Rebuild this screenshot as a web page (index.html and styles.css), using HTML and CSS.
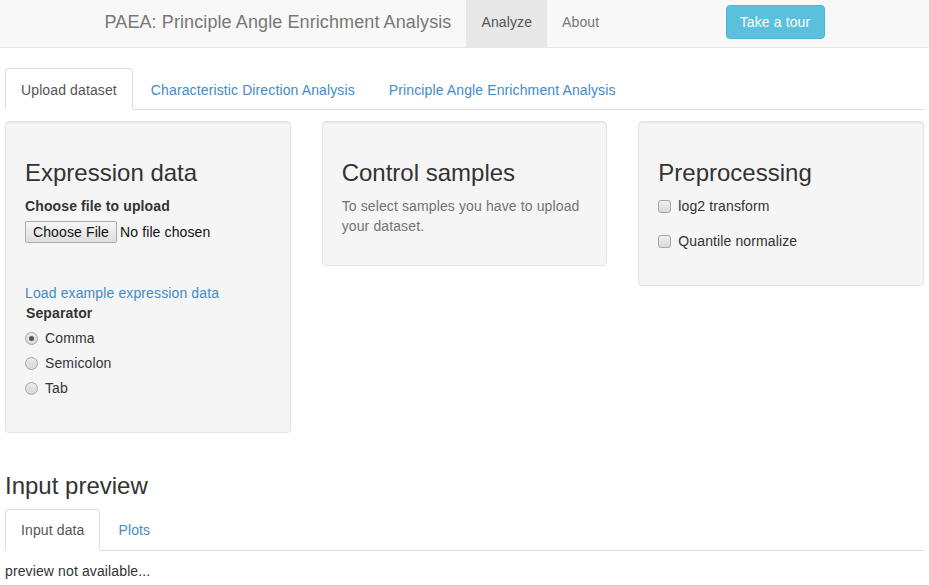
FILE: index.html
```html
<!DOCTYPE html>
<html>
<head>
<meta charset="utf-8">
<title>PAEA</title>
<link rel="stylesheet" href="styles.css">
</head>
<body>
<nav class="navbar">
  <div class="navbar-inner">
    <span class="brand">PAEA: Principle Angle Enrichment Analysis</span>
    <ul class="nav-main">
      <li class="active"><a>Analyze</a></li>
      <li><a>About</a></li>
    </ul>
    <button class="btn-tour">Take a tour</button>
  </div>
</nav>

<main class="page">
  <ul class="tabs tabs-top">
    <li class="active"><a>Upload dataset</a></li>
    <li><a>Characteristic Direction Analysis</a></li>
    <li><a>Principle Angle Enrichment Analysis</a></li>
  </ul>

  <div class="wells">
    <section class="well">
      <h3>Expression data</h3>
      <label class="field-label file-label">Choose file to upload</label>
      <div class="file-input">
        <span class="file-btn">Choose File</span>
        <span class="file-name">No file chosen</span>
      </div>
      <a class="link example-link">Load example expression data</a>
      <label class="field-label sep-label">Separator</label>
      <div class="radio-group">
        <div class="option"><span class="radio checked"></span><span>Comma</span></div>
        <div class="option"><span class="radio"></span><span>Semicolon</span></div>
        <div class="option"><span class="radio"></span><span>Tab</span></div>
      </div>
    </section>

    <section class="well">
      <h3>Control samples</h3>
      <p class="help">To select samples you have to upload your dataset.</p>
    </section>

    <section class="well">
      <h3>Preprocessing</h3>
      <div class="check-group">
        <div class="option"><span class="checkbox"></span><span>log2 transform</span></div>
        <div class="option"><span class="checkbox"></span><span>Quantile normalize</span></div>
      </div>
    </section>
  </div>

  <h3 class="section-title">Input preview</h3>
  <ul class="tabs tabs-bottom">
    <li class="active"><a>Input data</a></li>
    <li><a>Plots</a></li>
  </ul>
  <p class="preview">preview not available...</p>
</main>
</body>
</html>
```

FILE: styles.css
```css
* { box-sizing: border-box; }

html, body {
  margin: 0;
  padding: 0;
}

body {
  font-family: "Liberation Sans", Arial, sans-serif;
  font-size: 14px;
  line-height: 20px;
  letter-spacing: 0.12px;
  color: #333;
  background: #fff;
}

/* Navbar */
.navbar {
  height: 48px;
  background: #f8f8f8;
  border-bottom: 1px solid #e7e7e7;
}

.navbar-inner {
  width: 750px;
  margin: 0 auto;
  padding: 0 15px;
  height: 47px;
  display: flex;
  align-items: center;
}

.brand {
  font-size: 18px;
  color: #777;
  padding-right: 15px;
  line-height: 20px;
  margin-top: -4px;
  letter-spacing: 0.1px;
}

.nav-main {
  list-style: none;
  margin: 0;
  padding: 0;
  display: flex;
  height: 47px;
}

.nav-main li a {
  display: block;
  padding: 0 15px;
  height: 47px;
  line-height: 44px;
  color: #777;
}

.nav-main li.active a {
  background: #e7e7e7;
  color: #555;
}

.btn-tour {
  margin-left: auto;
  font-family: inherit;
  font-size: 14px;
  line-height: 20px;
  letter-spacing: 0.12px;
  color: #fff;
  background: #5bc0de;
  border: 1px solid #46b8da;
  border-radius: 4px;
  padding: 6px 12px;
  width: 99px;
  height: 34px;
  margin-top: -4px;
}

/* Page */
.page {
  padding: 0 5px;
}

.tabs {
  list-style: none;
  margin: 0;
  padding: 0;
  display: flex;
  border-bottom: 1px solid #ddd;
}

.tabs li {
  margin-right: 2px;
  margin-bottom: -1px;
}

.tabs li a {
  display: block;
  padding: 10px 15px;
  line-height: 20px;
  border: 1px solid transparent;
  border-radius: 4px 4px 0 0;
  color: #428bca;
}

.tabs li.active a {
  color: #555;
  background: #fff;
  border-color: #ddd;
  border-bottom-color: transparent;
}

.tabs-top {
  margin-top: 20px;
}

.tabs-top li a {
  padding-top: 10.5px;
  padding-bottom: 9.5px;
}

.link {
  color: #428bca;
}

/* Wells */
.wells {
  display: grid;
  grid-template-columns: repeat(3, 1fr);
  column-gap: 31px;
  align-items: start;
  margin-top: 11px;
}

.well {
  background: #f5f5f5;
  border: 1px solid #e3e3e3;
  border-radius: 4px;
  box-shadow: inset 0 1px 1px rgba(0, 0, 0, 0.05);
  padding: 19px;
}

.well h3,
.section-title {
  font-size: 24px;
  font-weight: 500;
  line-height: 1.1;
  margin: 19px 0 10px;
  letter-spacing: 0;
}

.field-label {
  display: block;
  font-weight: bold;
  margin-bottom: 4px;
}

.file-label {
  margin-bottom: 5px;
}

.file-input {
  display: flex;
  align-items: center;
  height: 22px;
}

.file-btn {
  display: inline-block;
  height: 22px;
  width: 92px;
  line-height: 20px;
  text-align: center;
  color: #111;
  border: 1px solid #adadad;
  border-radius: 2px;
  background: linear-gradient(#f6f6f6, #dedede);
}

.file-name {
  margin-left: 3px;
  color: #111;
}

.example-link {
  display: block;
  margin-top: 40px;
}

.sep-label {
  margin-left: 1px;
  margin-bottom: 5px;
}

.radio-group {
  display: flex;
  flex-direction: column;
  gap: 5px;
  margin-bottom: 15px;
}

.option {
  display: flex;
  align-items: center;
  height: 20px;
}

.radio {
  width: 13px;
  height: 13px;
  border-radius: 50%;
  border: 1px solid #a6a6a6;
  background: linear-gradient(#eaeaea, #d8d8d8);
  margin-right: 7px;
  position: relative;
  flex: none;
}

.radio.checked::after {
  content: "";
  position: absolute;
  left: 3px;
  top: 3px;
  width: 5px;
  height: 5px;
  border-radius: 50%;
  background: #555;
}

.help {
  color: #737373;
  margin: 0 0 10px;
}

.check-group {
  display: flex;
  flex-direction: column;
  gap: 15px;
  margin-bottom: 15px;
}

.checkbox {
  width: 13px;
  height: 13px;
  border-radius: 3px;
  border: 1px solid #a6a6a6;
  background: linear-gradient(#f0f0f0, #d9d9d9);
  margin-right: 7px;
  flex: none;
}

/* Bottom */
.section-title {
  margin-top: 40px;
  margin-bottom: 9px;
}

.preview {
  margin: 10px 0 0;
}
```
